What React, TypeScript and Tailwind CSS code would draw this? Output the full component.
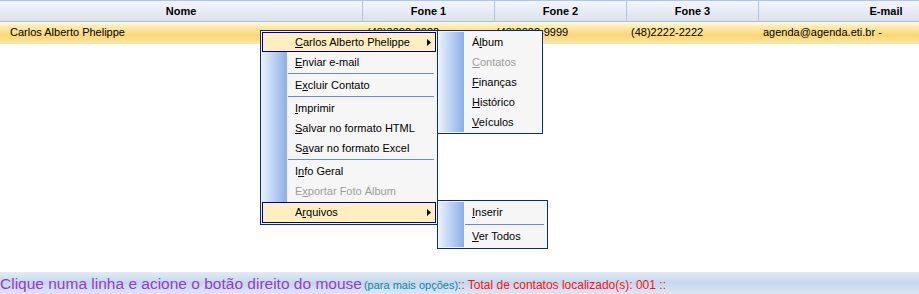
import type { ReactNode } from "react"

const cols = "grid grid-cols-[363px_132px_132px_132px_254px]"

function Item({ children, disabled, active, arrow, h = "h-[20px]" }: { children: ReactNode; disabled?: boolean; active?: boolean; arrow?: boolean; h?: string }) {
  return (
    <div
      className={`${h} flex items-center justify-between whitespace-nowrap ${
        active ? "bg-[#ffeec2] border border-[#000080] pl-[32px] pr-[4px]" : "pl-[33px] pr-[5px]"
      } ${disabled ? "text-[#9d9d9d]" : "text-black"}`}
    >
      <span>{children}</span>
      {arrow && (
        <svg width="4" height="7" viewBox="0 0 4 7">
          <path d="M0 0 L4 3.5 L0 7 Z" fill="#000" />
        </svg>
      )}
    </div>
  )
}

function Sep() {
  return (
    <div className="h-[3px] flex items-center ml-[26px] mr-[2px]">
      <div className="h-px w-full bg-[#6a8ccc]" />
    </div>
  )
}

const menuBox =
  "absolute border border-[#0b2a80] p-px bg-[#f6f6f6] bg-[linear-gradient(to_right,#e6f0fe,#8cafe6)] bg-no-repeat bg-[length:25px_100%] bg-[position:0_0] bg-origin-content"

export default function App() {
  return (
    <div className="relative w-[919px] h-[294px] overflow-hidden bg-white flex flex-col font-['Liberation_Sans',Arial,sans-serif] text-[11px] text-black">
      {/* Header */}
      <div className={`${cols} h-[22px] shrink-0 border-t border-[#aac6ec] border-b border-b-[#a9bdd6] bg-[linear-gradient(to_bottom,#f3f5fa,#dce3ee)] font-bold`}>
        <div className="flex items-center justify-center border-r border-[#b3c4d9]">Nome</div>
        <div className="flex items-center justify-center border-r border-[#b3c4d9]">Fone 1</div>
        <div className="flex items-center justify-center border-r border-[#b3c4d9]">Fone 2</div>
        <div className="flex items-center justify-center border-r border-[#b3c4d9]">Fone 3</div>
        <div className="flex items-center justify-center">E-mail</div>
      </div>

      {/* Selected row */}
      <div className={`${cols} h-[22px] shrink-0 border-b border-[#f1e6bd] bg-[linear-gradient(to_bottom,#fff8de_0%,#fde7a4_30%,#fcd674_65%,#fde6a2_100%)]`}>
        <div className="flex items-center pl-[10px]">Carlos Alberto Phelippe</div>
        <div className="flex items-center pl-[4px]">(48)3222-2222</div>
        <div className="flex items-center pl-[1px]">(48)2222-9999</div>
        <div className="flex items-center pl-[4px]">(48)2222-2222</div>
        <div className="flex items-center pl-[4px]">agenda@agenda.eti.br -</div>
      </div>

      <div className="flex-1" />

      {/* Footer */}
      <div className="h-[22px] shrink-0 flex items-baseline pt-[3px] whitespace-nowrap bg-[linear-gradient(to_bottom,#e2ebf6_0%,#c6d7ed_50%,#dbe6f3_100%)]">
        <span className="text-[15.5px] leading-[18px] text-[#9a3ac8]">Clique numa linha e acione o botão direito do mouse</span>
        <span className="ml-[2px] text-[11px] text-[#0a88a8]">(para mais opções)</span>
        <span className="text-[12px] text-[#ff1010]">:: Total de contatos localizado(s): 001 ::</span>
      </div>

      {/* Context menu */}
      <div className={`${menuBox} left-[260px] top-[30px] w-[178px]`}>
        <Item active arrow>
          <u>C</u>arlos Alberto Phelippe
        </Item>
        <Item>
          <u>E</u>nviar e-mail
        </Item>
        <Sep />
        <Item>
          E<u>x</u>cluir Contato
        </Item>
        <Sep />
        <Item>
          <u>I</u>mprimir
        </Item>
        <Item>
          <u>S</u>alvar no formato HTML
        </Item>
        <Item>
          S<u>a</u>var no formato Excel
        </Item>
        <Sep />
        <Item>
          I<u>n</u>fo Geral
        </Item>
        <Item disabled>
          E<u>x</u>portar Foto Álbum
        </Item>
        <div className="mt-px">
          <Item active arrow h="h-[21px]">
            A<u>r</u>quivos
          </Item>
        </div>
      </div>

      {/* Submenu: contato */}
      <div className={`${menuBox} left-[437px] top-[30px] w-[106px]`}>
        <Item>
          Á<u>l</u>bum
        </Item>
        <Item disabled>
          <u>C</u>ontatos
        </Item>
        <Item>
          <u>F</u>inanças
        </Item>
        <Item>
          <u>H</u>istórico
        </Item>
        <Item>
          <u>V</u>eículos
        </Item>
      </div>

      {/* Submenu: arquivos */}
      <div className={`${menuBox} left-[437px] top-[200px] w-[111px]`}>
        <Item h="h-[21px]">
          <u>I</u>nserir
        </Item>
        <Sep />
        <Item h="h-[21px]">
          <u>V</u>er Todos
        </Item>
      </div>
    </div>
  )
}
